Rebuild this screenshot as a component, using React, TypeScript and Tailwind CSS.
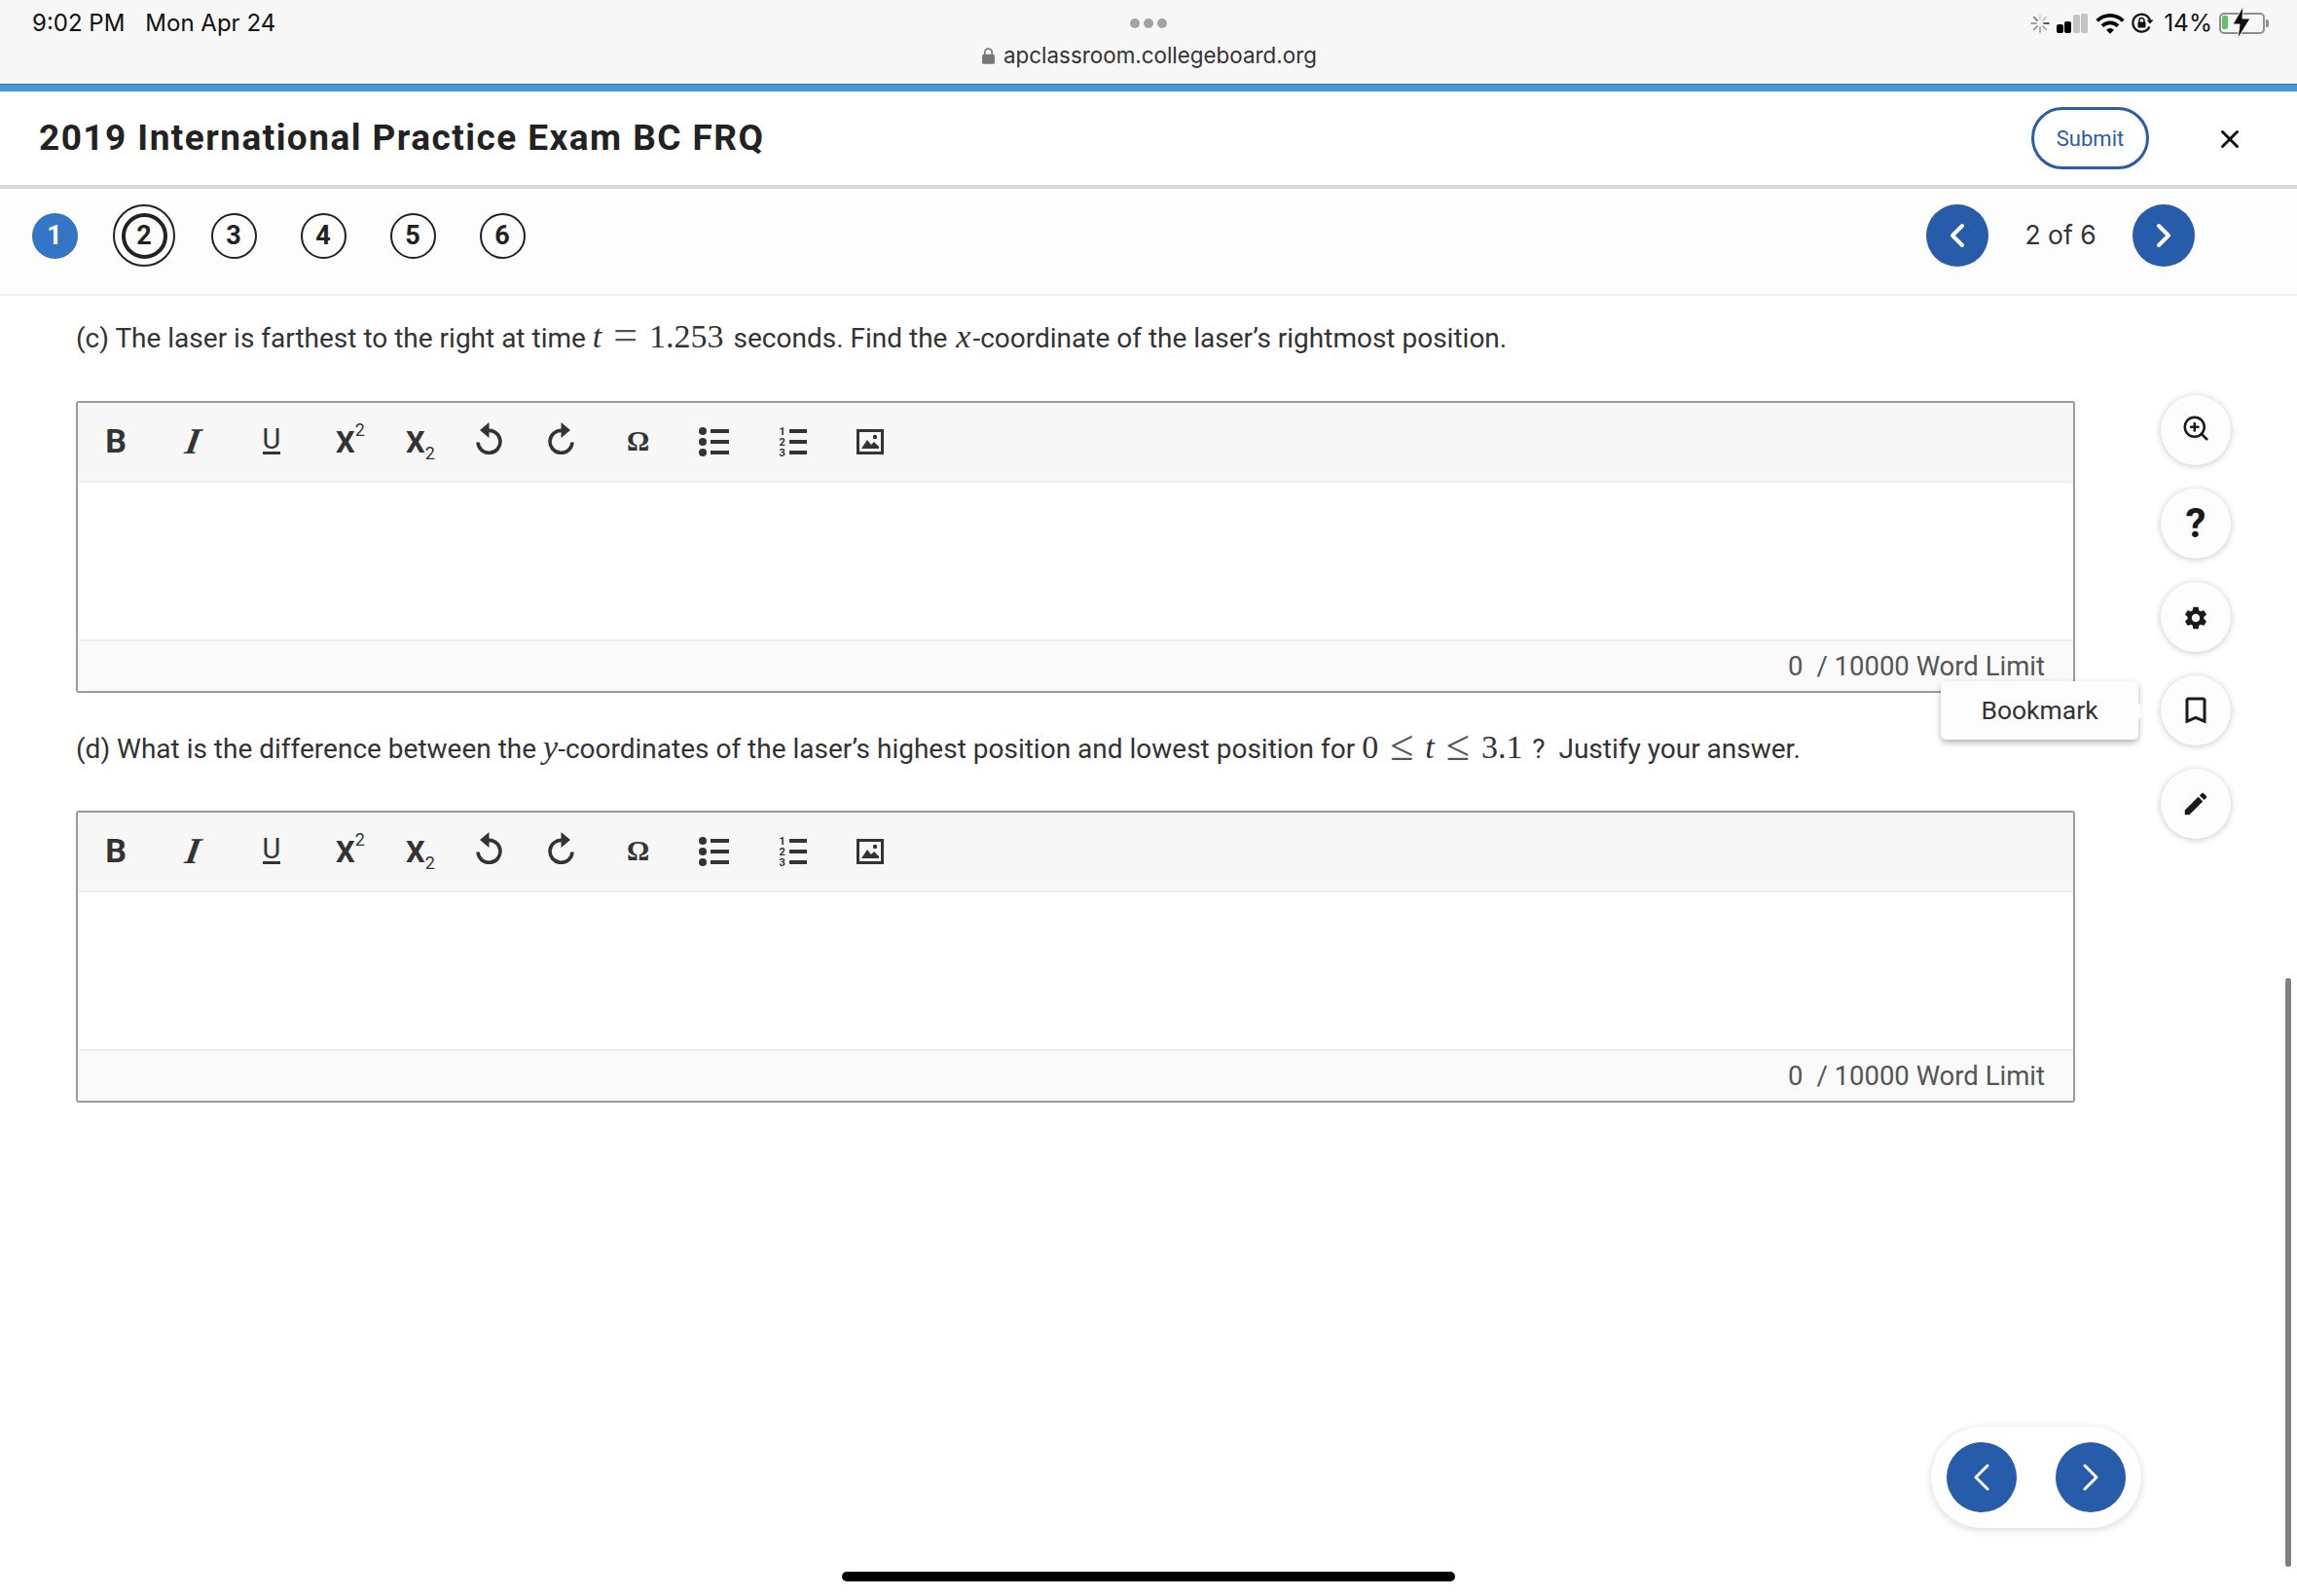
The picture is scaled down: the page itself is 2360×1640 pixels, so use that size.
import React from 'react';
import { ChevronLeft, ChevronRight, X, ZoomIn } from 'lucide-react';
import { MdSettings, MdEdit, MdBookmarkBorder, MdWifi } from 'react-icons/md';

const QUESTIONS = [3, 4, 5, 6];

function Spinner() {
  const spokes = [0, 45, 90, 135, 180, 225, 270, 315];
  return (
    <svg width="20" height="20" viewBox="0 0 20 20">
      {spokes.map((a, i) => (
        <line key={a} x1="10" y1="1" x2="10" y2="6" stroke="#222" strokeWidth="1.6" strokeLinecap="round" opacity={i === 2 ? 1 : 0.18 + i * 0.06} transform={`rotate(${a} 10 10)`} />
      ))}
    </svg>
  );
}

function Signal() {
  return (
    <div className="flex items-end gap-[1.5px] h-[20px]">
      <div className="w-[7px] h-[9px] rounded-[2px] bg-black" />
      <div className="w-[7px] h-[12px] rounded-[2px] bg-black" />
      <div className="w-[7px] h-[19px] rounded-[2px] bg-[#c4c4c4]" />
      <div className="w-[7px] h-[20px] rounded-[2px] bg-[#c4c4c4]" />
    </div>
  );
}

function RotationLock() {
  return (
    <svg width="24" height="22" viewBox="0 0 24 22">
      <path d="M18.5 14.5A9 9 0 1 1 19 8" fill="none" stroke="#111" strokeWidth="2.2" />
      <path d="M15.5 7.5h7l-3.5 4z" fill="#111" />
      <rect x="6.5" y="9.5" width="8" height="6" rx="1" fill="#111" />
      <path d="M8 10V8a2.5 2.5 0 0 1 5 0v2" fill="none" stroke="#111" strokeWidth="1.5" />
    </svg>
  );
}

function Battery() {
  return (
    <div className="relative flex items-center">
      <div className="w-[47px] h-[22px] rounded-[5px] border-2 border-[#8e8e8e] p-[1px]">
        <div className="w-[6px] h-[14px] rounded-[2px] bg-[#5fc462]" />
      </div>
      <div className="w-[3px] h-[8px] ml-[1px] rounded-r-[2px] bg-[#8e8e8e]" />
      <svg className="absolute left-[13px] top-[-7px]" width="20" height="34" viewBox="0 0 20 34">
        <path d="M12 0L1 19h7L6 34 19 13h-8z" fill="#111" stroke="#f7f7f7" strokeWidth="1" />
      </svg>
    </div>
  );
}

function StatusBar() {
  return (
    <div className="h-[86px] bg-[#f7f7f7] grid grid-cols-[1fr_auto_1fr] px-[33px] [font-family:Inter,sans-serif] text-[#111]">
      <div className="flex gap-[21px] pt-[10px] h-[38px] items-center text-[24px] leading-none">
        <span>9:02 PM</span>
        <span>Mon Apr 24</span>
      </div>
      <div className="flex flex-col items-center pt-[19px]">
        <div className="flex gap-[4px]">
          <div className="w-[10px] h-[10px] rounded-full bg-[#a3a3a3]" />
          <div className="w-[10px] h-[10px] rounded-full bg-[#a3a3a3]" />
          <div className="w-[10px] h-[10px] rounded-full bg-[#a3a3a3]" />
        </div>
        <div className="flex items-center gap-[9px] mt-[14px] ml-[2px] text-[22.4px] leading-[28px] text-[#333]">
          <svg width="13" height="17" viewBox="0 0 14 18">
            <rect x="0" y="7" width="14" height="11" rx="2" fill="#777" />
            <path d="M3 8V5a4 4 0 0 1 8 0v3" fill="none" stroke="#777" strokeWidth="1.8" />
          </svg>
          <span>apclassroom.collegeboard.org</span>
        </div>
      </div>
      <div className="flex justify-end items-center gap-[7px] pt-[9px] h-[38px] mr-[-4px]">
        <Spinner />
        <Signal />
        <MdWifi size={32} className="text-black -mr-[1px]" />
        <RotationLock />
        <span className="text-[24.5px] leading-none ml-[2px]">14%</span>
        <Battery />
      </div>
    </div>
  );
}

function Header() {
  return (
    <div className="h-[100px] border-b-4 border-[#d6d6d6] bg-white flex items-center pl-[40px]">
      <h1 className="text-[37px] font-bold text-[#222] tracking-[1.45px]">2019 International Practice Exam BC FRQ</h1>
      <button className="ml-auto w-[121px] h-[64px] rounded-full border-[3px] border-[#2a5caa] text-[22px] text-[#2a5caa]">Submit</button>
      <X size={30} strokeWidth={2.4} className="ml-[68px] mr-[54px] mt-[2px] text-[#111]" />
    </div>
  );
}

function QuestionNav() {
  return (
    <div className="h-[110px] pb-[12px] border-b-2 border-[#f0f0f0] bg-[#fdfdfd] flex items-center pl-[10px] text-[27px] font-bold text-[#222]">
      <div className="w-[92px] flex justify-center">
        <div className="w-[47px] h-[47px] rounded-full bg-[#3575c5] text-white flex items-center justify-center">1</div>
      </div>
      <div className="w-[92px] flex justify-center">
        <div className="w-[64px] h-[64px] rounded-full border-2 border-[#222] flex items-center justify-center">
          <div className="w-[47px] h-[47px] rounded-full border-[4px] border-[#222] flex items-center justify-center">2</div>
        </div>
      </div>
      {QUESTIONS.map((q) => (
        <div key={q} className="w-[92px] flex justify-center">
          <div className="w-[47px] h-[47px] rounded-full border-2 border-[#222] flex items-center justify-center">{q}</div>
        </div>
      ))}
      <div className="ml-auto mr-[105px] flex items-center font-normal">
        <button className="w-[64px] h-[64px] rounded-full bg-[#275cab] text-white flex items-center justify-center">
          <ChevronLeft size={40} strokeWidth={2.4} />
        </button>
        <span className="w-[148px] text-center text-[26.5px] text-[#333] [font-family:Inter,sans-serif]">2 of 6</span>
        <button className="w-[64px] h-[64px] rounded-full bg-[#275cab] text-white flex items-center justify-center">
          <ChevronRight size={40} strokeWidth={2.4} />
        </button>
      </div>
    </div>
  );
}

function Undo({ flip }: { flip?: boolean }) {
  return (
    <svg width="32" height="34" viewBox="0 0 32 34" className={flip ? '-scale-x-100' : ''}>
      <path d="M5 21.5A11.5 11.5 0 1 0 15 9.5" fill="none" stroke="#333" strokeWidth="3.6" />
      <path d="M16.5 1v16L7 9z" fill="#333" />
    </svg>
  );
}

function Toolbar() {
  return (
    <div className="h-[82px] bg-[#f7f7f7] border-b-2 border-[#eeeeee] flex items-center text-[#333]">
      <div className="w-[78px] flex justify-center text-[34px] leading-none font-bold -mt-[2px]">B</div>
      <div className="w-[81px] flex justify-center text-[38px] leading-none italic font-bold [font-family:'Liberation_Serif',serif] -skew-x-[10deg] -mt-[2px]">I</div>
      <div className="w-[80px] flex justify-center">
        <span className="text-[29px] leading-[20px] border-b-[3px] border-[#333] pb-[3px]">U</span>
      </div>
      <div className="w-[76px] flex justify-center items-start pl-[6px]">
        <span className="text-[31px] leading-none font-bold">X</span>
        <span className="text-[18px] leading-none mt-[-6px]">2</span>
      </div>
      <div className="w-[71px] flex justify-center items-end pl-[3px]">
        <span className="text-[31px] leading-none font-bold">X</span>
        <span className="text-[18px] leading-none mb-[-5px]">2</span>
      </div>
      <div className="w-[71px] flex justify-center -mt-[8px]"><Undo /></div>
      <div className="w-[80px] flex justify-center -mt-[8px]"><Undo flip /></div>
      <div className="w-[77px] flex justify-center text-[29px] leading-none font-bold [font-family:'Liberation_Serif',serif] -mt-[2px]">Ω</div>
      <div className="w-[78px] flex flex-col items-center gap-[3px]">
        {[0, 1, 2].map((i) => (
          <div key={i} className="flex items-center gap-[4px]">
            <div className="w-[8px] h-[8px] rounded-full bg-[#333]" />
            <div className="w-[19px] h-[4px] bg-[#333]" />
          </div>
        ))}
      </div>
      <div className="w-[82px] flex flex-col items-center pl-[3px]">
        {[1, 2, 3].map((i) => (
          <div key={i} className="flex items-center gap-[4px] h-[11px]">
            <span className="w-[6px] text-[11px] leading-none font-bold">{i}</span>
            <div className="w-[18px] h-[4px] bg-[#333]" />
          </div>
        ))}
      </div>
      <div className="w-[79px] flex justify-center">
        <svg width="28" height="26" viewBox="0 0 28 26">
          <rect x="1.5" y="1.5" width="25" height="23" fill="none" stroke="#333" strokeWidth="3" />
          <path d="M5 20l6-9 4 5 3-3 5 5v2z" fill="#333" />
          <circle cx="19" cy="8" r="2.2" fill="#333" />
        </svg>
      </div>
    </div>
  );
}

function Editor() {
  return (
    <div className="h-[300px] border-2 border-[#9a9a9a] rounded-[3px] flex flex-col bg-white">
      <Toolbar />
      <div className="flex-1" />
      <div className="h-[53px] bg-[#fafafa] border-t-2 border-[#eeeeee] flex items-center justify-end pr-[29px] text-[27.5px] text-[#555]">
        <span>0</span>
        <span className="ml-[14px]">/ 10000 Word Limit</span>
      </div>
    </div>
  );
}

function Math({ children }: { children: React.ReactNode }) {
  return <span className="[font-family:'Liberation_Serif',serif] text-[34px]">{children}</span>;
}

function Rel({ children }: { children: React.ReactNode }) {
  return <span className="text-[44px] leading-none font-light text-[#555] mx-[12px] align-[-2px]">{children}</span>;
}

function SideButton({ children }: { children: React.ReactNode }) {
  return (
    <button className="relative w-[72px] h-[72px] rounded-full bg-[#fdfdfd] shadow-[0_1px_7px_rgba(0,0,0,0.22)] flex items-center justify-center text-[#1a1a1a]">
      {children}
    </button>
  );
}

export default function App() {
  return (
    <div className="relative w-[2360px] h-[1640px] overflow-hidden bg-white [font-family:Roboto,sans-serif]">
      <StatusBar />
      <div className="h-[8px] bg-[#4596d8] border-t border-[#2f78b5]" />
      <Header />
      <QuestionNav />

      <div className="flex">
        <div className="ml-[78px] w-[2054px] text-[28px] text-[#333]">
          <p className="h-[40px] leading-[40px] mt-[19px] mb-[49px] whitespace-nowrap">
            (c) The laser is farthest to the right at time <Math><i>t</i><Rel>=</Rel><span className="mr-[3px]">1.253</span></Math> seconds. Find the <Math><i className="mx-[2px]">x</i></Math>-coordinate of the laser’s rightmost position.
          </p>
          <Editor />
          <p className="h-[40px] leading-[40px] mt-[33px] mb-[48px] whitespace-nowrap">
            (d) What is the difference between the <Math><i>y</i></Math>-coordinates of the laser’s highest position and lowest position for <Math>0<Rel>≤</Rel><i>t</i><Rel>≤</Rel><span className="mr-[3px]">3.1</span></Math> ?&nbsp; Justify your answer.
          </p>
          <Editor />
        </div>

        <div className="ml-[88px] mt-[102px] flex flex-col gap-[24px]">
          <SideButton><ZoomIn size={30} strokeWidth={2} className="-mt-[4px]" /></SideButton>
          <SideButton><span className="text-[42px] font-bold leading-none">?</span></SideButton>
          <SideButton><MdSettings size={28} className="mt-[2px]" /></SideButton>
          <SideButton>
            <MdBookmarkBorder size={36} />
            <div className="absolute right-[95px] top-[6px] w-[203px] h-[60px] rounded-[5px] bg-[#fdfdfd] shadow-[0_3px_6px_rgba(0,0,0,0.3)] flex items-center justify-center text-[26.5px] font-normal text-[#333]">
              Bookmark
              <div className="absolute right-[-8px] top-[22px] w-0 h-0 border-y-[9px] border-y-transparent border-l-[8px] border-l-[#fbfbfb]" />
            </div>
          </SideButton>
          <SideButton><MdEdit size={30} /></SideButton>
        </div>
      </div>

      <div className="absolute left-[1984px] top-[1466px] w-[216px] h-[104px] rounded-full bg-white shadow-[0_2px_8px_rgba(0,0,0,0.16)] flex items-center justify-between px-[16px]">
        <button className="w-[72px] h-[72px] rounded-full bg-[#275cab] text-white flex items-center justify-center">
          <ChevronLeft size={48} strokeWidth={1.5} />
        </button>
        <button className="w-[72px] h-[72px] rounded-full bg-[#275cab] text-white flex items-center justify-center">
          <ChevronRight size={48} strokeWidth={1.5} />
        </button>
      </div>

      <div className="absolute left-[2348px] top-[1005px] w-[6px] h-[605px] rounded-full bg-[#808080]" />
      <div className="absolute left-[865px] top-[1615px] w-[630px] h-[10px] rounded-full bg-black" />
    </div>
  );
}
